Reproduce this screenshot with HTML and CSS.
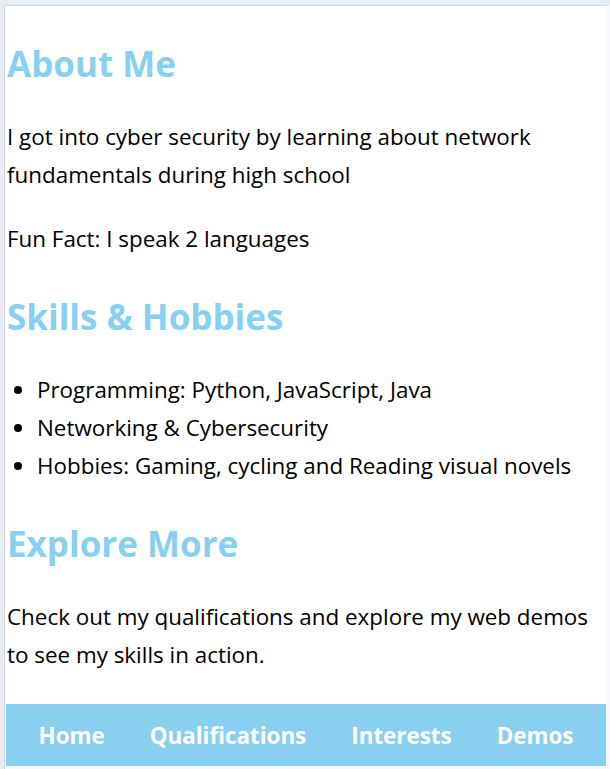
FILE: index.html
```html
<!DOCTYPE html>
<html lang="en">
<head>
<meta charset="utf-8">
<title>About Me</title>
<link rel="stylesheet" href="styles.css">
</head>
<body>
<div class="frame">
  <div class="page">
    <main class="content">
      <h2 class="heading">About Me</h2>
      <p class="text">I got into cyber security by learning about network fundamentals during high school</p>
      <p class="text">Fun Fact: I speak 2 languages</p>
      <h2 class="heading">Skills &amp; Hobbies</h2>
      <ul class="list">
        <li>Programming: Python, JavaScript, Java</li>
        <li>Networking &amp; Cybersecurity</li>
        <li>Hobbies: Gaming, cycling and Reading visual novels</li>
      </ul>
      <h2 class="heading">Explore More</h2>
      <p class="text">Check out my qualifications and explore my web demos to see my skills in action.</p>
    </main>
    <nav class="nav">
      <a class="nav-link" href="#">Home</a>
      <a class="nav-link" href="#">Qualifications</a>
      <a class="nav-link" href="#">Interests</a>
      <a class="nav-link" href="#">Demos</a>
    </nav>
    <div class="page-end"></div>
  </div>
</div>
</body>
</html>
```
FILE: styles.css
```css
html, body {
  margin: 0;
  padding: 0;
  height: 100%;
}

body {
  background: #e8ecf3;
  font-family: "Open Sans", "Noto Sans", sans-serif;
  color: #000;
  overflow: hidden;
}

.frame {
  padding: 5px 0 0 4px;
}

.page {
  background: #ffffff;
  border-left: 1px solid #cfd3da;
  border-top: 1px solid #d3d7de;
  border-right: 4px solid #f6f8fc;
  display: flex;
  flex-direction: column;
}

.content {
  padding: 0 0 0 2px;
}

.heading {
  color: #89cff0;
  font-size: 35px;
  font-weight: 700;
  line-height: 44px;
  margin: 37px 0 32px;
}

.heading:first-child {
  margin-top: 36px;
}

.text {
  font-size: 22.4px;
  line-height: 38px;
  margin: 26px 0;
}

.list {
  font-size: 22.4px;
  line-height: 38px;
  margin: 26px 0;
  padding-left: 30px;
}

.nav {
  margin: 4px 0 0 1px;
  height: 62px;
  background: #89cff0;
  display: flex;
  justify-content: center;
  align-items: center;
  gap: 45px;
}

.nav-link {
  color: #ffffff;
  font-weight: 700;
  font-size: 22.4px;
  text-decoration: none;
}

.page-end {
  height: 10px;
  background: #f7f9fd;
}
```
